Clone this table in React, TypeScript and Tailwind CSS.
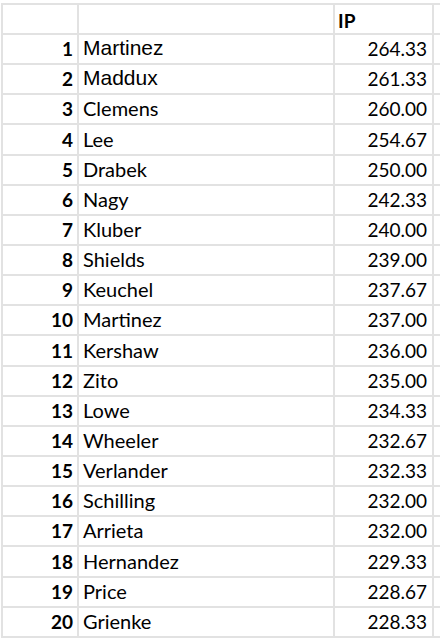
const rows: [number, string, string][] = [
  [1, "Martinez", "264.33"],
  [2, "Maddux", "261.33"],
  [3, "Clemens", "260.00"],
  [4, "Lee", "254.67"],
  [5, "Drabek", "250.00"],
  [6, "Nagy", "242.33"],
  [7, "Kluber", "240.00"],
  [8, "Shields", "239.00"],
  [9, "Keuchel", "237.67"],
  [10, "Martinez", "237.00"],
  [11, "Kershaw", "236.00"],
  [12, "Zito", "235.00"],
  [13, "Lowe", "234.33"],
  [14, "Wheeler", "232.67"],
  [15, "Verlander", "232.33"],
  [16, "Schilling", "232.00"],
  [17, "Arrieta", "232.00"],
  [18, "Hernandez", "229.33"],
  [19, "Price", "228.67"],
  [20, "Grienke", "228.33"],
];

const calibri = "font-['Lato','Open_Sans',sans-serif]";
const arial = "font-['Liberation_Sans',Arial,sans-serif]";

export default function App() {
  return (
    <div className="w-[440px] h-[639px] overflow-hidden bg-white pt-[3px] pl-[1px] text-black">
      <div className={`flex h-[32px] border-t-2 border-b-2 border-[#e2e2e2] ${calibri}`}>
        <div className="w-[78px] shrink-0 border-l-2 border-r-2 border-[#e2e2e2]" />
        <div className="w-[256px] shrink-0 border-r-2 border-[#e2e2e2]" />
        <div className="w-[99px] shrink-0 border-r-2 border-[#e2e2e2] flex items-end pb-[3px] pl-[3px] text-[19px] font-bold leading-none">
          IP
        </div>
        <div className="flex-1" />
      </div>
      {rows.map(([n, name, ip]) => (
        <div key={n} className="flex h-[30.15px] border-b-2 border-[#e2e2e2] text-[19px] leading-none">
          <div className={`w-[78px] shrink-0 border-l-2 border-r-2 border-[#e2e2e2] flex items-end justify-end pb-[5px] pr-[4px] font-bold ${calibri}`}>
            {n}
          </div>
          <div className={`w-[256px] shrink-0 border-r-2 border-[#e2e2e2] flex items-end pb-[5px] pl-[4px] ${n <= 2 ? `${arial} text-[21px]` : `${calibri} text-[20px]`}`}>
            {name}
          </div>
          <div className={`w-[99px] shrink-0 border-r-2 border-[#e2e2e2] flex items-end justify-end pb-[5px] pr-[5px] ${calibri}`}>
            {ip}
          </div>
          <div className="flex-1" />
        </div>
      ))}
    </div>
  );
}
